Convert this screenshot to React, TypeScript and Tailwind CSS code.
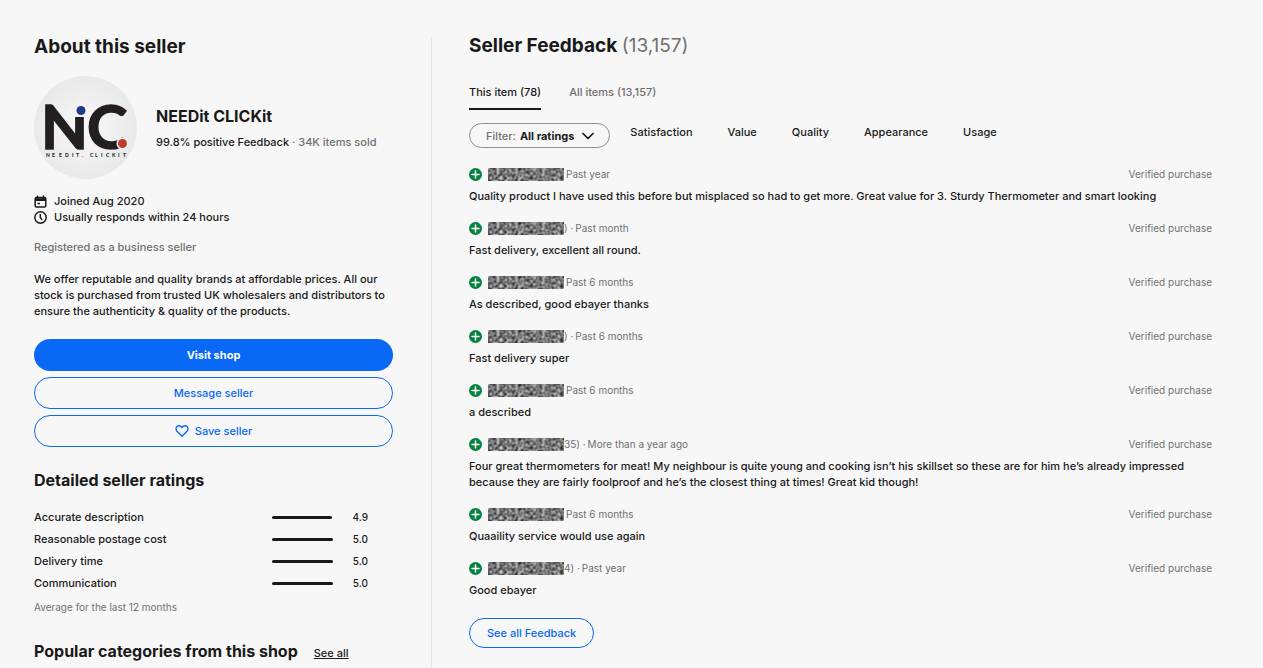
import { useState } from "react";

const tabs = ["This item (78)", "All items (13,157)"];
const topics = ["Satisfaction", "Value", "Quality", "Appearance", "Usage"];

const ratings = [
  { label: "Accurate description", score: 4.9 },
  { label: "Reasonable postage cost", score: 5 },
  { label: "Delivery time", score: 5 },
  { label: "Communication", score: 5 },
];

const feedback = [
  { tail: "", when: "Past year", text: "Quality product I have used this before but misplaced so had to get more. Great value for 3. Sturdy Thermometer and smart looking" },
  { tail: ")", when: "Past month", text: "Fast delivery, excellent all round." },
  { tail: "", when: "Past 6 months", text: "As described, good ebayer thanks" },
  { tail: ")", when: "Past 6 months", text: "Fast delivery super" },
  { tail: "", when: "Past 6 months", text: "a described" },
  { tail: "35)", when: "More than a year ago", text: "Four great thermometers for meat! My neighbour is quite young and cooking isn’t his skillset so these are for him he’s already impressed because they are fairly foolproof and he’s the closest thing at times! Great kid though!" },
  { tail: "", when: "Past 6 months", text: "Quaaility service would use again" },
  { tail: "4)", when: "Past year", text: "Good ebayer" },
];

function Logo() {
  return (
    <svg viewBox="0 0 103 103" className="size-[103px] shrink-0" role="img" aria-label="NEEDit CLICKit">
      <defs>
        <radialGradient id="disc">
          <stop offset="0" stopColor="#f8f8f8" />
          <stop offset="1" stopColor="#e9e9e9" />
        </radialGradient>
      </defs>
      <circle cx="51.5" cy="51.5" r="51.5" fill="url(#disc)" />
      <text x="7" y="73" fontFamily="Lato" fontWeight="700" fontSize="61" fill="#231f20" stroke="#231f20" strokeWidth="1.500">N</text>
      <rect x="41" y="27" width="13" height="14" fill="#f4f4f4" />
      <circle cx="47" cy="34.500" r="4.500" fill="#233a8c" />
      <text x="53" y="73" fontFamily="Lato" fontWeight="700" fontSize="61" fill="#231f20" stroke="#231f20" strokeWidth="1.500">C</text>
      <circle cx="88.500" cy="67.500" r="6" fill="#f1f1f1" />
      <circle cx="88.500" cy="67.500" r="4.500" fill="#c0392b" />
      <text x="12 18 25 31 38 42 48 56 61 67 72 78 84 89" y="81" fontFamily="Lato" fontWeight="900" fontSize="5" fill="#231f20">NEEDIT.CLICKIT</text>
    </svg>
  );
}

function Calendar() {
  return (
    <svg viewBox="0 0 13 13" className="size-[13px]" fill="none" stroke="#191919" strokeWidth="1.500">
      <rect x="1.200" y="2.500" width="10.600" height="9.500" rx="1.200" />
      <path d="M1 4h11M1 5.200h11M3.500 .5v3M9.500 .5v3" />
      <path d="M3.500 8.500h2.500" />
    </svg>
  );
}

function Clock() {
  return (
    <svg viewBox="0 0 13 13" className="size-[13px]" fill="none" stroke="#191919" strokeWidth="1.500">
      <circle cx="6.500" cy="6.500" r="5.700" />
      <path d="M6.300 3v3.800l2 2" />
    </svg>
  );
}

function Heart() {
  return (
    <svg viewBox="0 0 14 14" className="size-[14px]" fill="none" stroke="currentColor" strokeWidth="1.400" strokeLinejoin="round">
      <path d="M7 12.300 2 7.300C.6 5.800.7 3.600 2 2.500 3.500 1.200 5.700 1.500 7 3.500 8.300 1.500 10.500 1.200 12 2.500c1.300 1.100 1.400 3.300 0 4.800z" />
    </svg>
  );
}

function Positive() {
  return (
    <svg viewBox="0 0 13 13" className="size-[13px] shrink-0" role="img" aria-label="Positive feedback">
      <circle cx="6.500" cy="6.500" r="6.500" fill="#05823f" />
      <path d="M6.500 3v7M3 6.500h7" stroke="#fff" strokeWidth="1.500" strokeLinecap="round" />
    </svg>
  );
}

// grainy strip over the buyer's name
function HiddenName() {
  return (
    <svg className="ml-[6px] h-[13px] w-[76px] shrink-0" aria-hidden="true">
      <filter id="grain" x="0" y="0" width="100%" height="100%" colorInterpolationFilters="sRGB">
        <feTurbulence type="fractalNoise" baseFrequency="0.33" numOctaves="1" seed="4" />
        <feColorMatrix values="1.1 0 0 0 -0.08  1.1 0 0 0 -0.08  1.1 0 0 0 -0.08  0 0 0 0 1" />
      </filter>
      <rect width="76" height="13" filter="url(#grain)" />
    </svg>
  );
}

export default function App() {
  const [tab, setTab] = useState(0);

  return (
    <div className="flex min-h-screen bg-[#f7f7f7] pt-[37px] pr-[51px] pl-[34px] font-['Inter',sans-serif] text-[11px] leading-4 font-medium text-[#191919]">
      <aside className="w-[398px] shrink-0 border-r border-[#e5e5e5] pr-[38px]">
        <h2 className="text-[19px] leading-5 font-bold">About this seller</h2>

        <div className="mt-[19px] flex items-center gap-[19px]">
          <Logo />
          <div>
            <h3 className="text-base leading-5 font-bold">NEEDit CLICKit</h3>
            <p className="mt-2 whitespace-nowrap">
              99.8% positive Feedback <span className="text-[#707070]">· 34K items sold</span>
            </p>
          </div>
        </div>

        <ul className="mt-[14px]">
          <li className="flex items-center gap-[7px]"><Calendar />Joined Aug 2020</li>
          <li className="flex items-center gap-[7px]"><Clock />Usually responds within 24 hours</li>
        </ul>
        <p className="mt-[14px] text-[#707070]">Registered as a business seller</p>
        <p className="mt-4">
          We offer reputable and quality brands at affordable prices. All our stock is purchased from trusted UK wholesalers and distributors to ensure the authenticity &amp; quality of the products.
        </p>

        <div className="mt-5 flex flex-col gap-[6px]">
          <button className="h-8 rounded-full bg-[#0968f6] font-bold text-white">Visit shop</button>
          <button className="h-8 rounded-full border border-[#0968f6] text-[#0968f6]">Message seller</button>
          <button className="flex h-8 items-center justify-center gap-[6px] rounded-full border border-[#0968f6] text-[#0968f6]">
            <Heart />Save seller
          </button>
        </div>

        <h2 className="mt-[23px] text-base leading-5 font-bold">Detailed seller ratings</h2>
        <table className="mt-4 w-[334px]">
          <tbody>
            {ratings.map((r) => (
              <tr key={r.label} className="h-[22px]">
                <th scope="row" className="text-left font-medium">{r.label}</th>
                <td className="w-[62px]">
                  <div className="h-[3px] rounded-full bg-[#191919]" style={{ width: `${(r.score / 5) * 61}px` }} />
                </td>
                <td className="w-[34px] text-right text-[10px]">{r.score.toFixed(1)}</td>
              </tr>
            ))}
          </tbody>
        </table>
        <p className="mt-[5px] text-[10px] font-normal text-[#707070]">Average for the last 12 months</p>

        <div className="mt-[26px] flex items-baseline gap-4">
          <h2 className="text-base leading-5 font-bold whitespace-nowrap">Popular categories from this shop</h2>
          <a href="#" className="whitespace-nowrap underline">See all</a>
        </div>
      </aside>

      <main className="min-w-0 flex-1 pl-[37px]">
        <h2 className="-mt-px text-[19px] leading-5 font-bold">
          Seller Feedback <span className="font-normal text-[#707070]">(13,157)</span>
        </h2>

        <div role="tablist" className="mt-7 flex gap-7">
          {tabs.map((name, i) => (
            <button
              key={name}
              role="tab"
              aria-selected={tab === i}
              onClick={() => setTab(i)}
              className={tab === i ? "border-b-2 border-[#191919] pb-2" : "border-b-2 border-transparent pb-2 text-[#707070]"}
            >
              {name}
            </button>
          ))}
        </div>

        <div className="mt-[13px] flex items-start">
          <label className="flex h-[25px] items-center rounded-full border border-[#8f8f8f] pr-[15px] pl-4">
            <span className="text-[#707070]">Filter:</span>
            <select className="ml-1 field-sizing-content appearance-none bg-transparent font-bold">
              <option>All ratings</option>
              <option>Positive</option>
              <option>Neutral</option>
              <option>Negative</option>
            </select>
            <svg viewBox="0 0 12 8" className="ml-2 h-2 w-3" fill="none" stroke="#191919" strokeWidth="1.700" strokeLinecap="round" strokeLinejoin="round">
              <path d="M1 1.500 6 6.500l5-5" />
            </svg>
          </label>
          <div className="ml-5 flex gap-[35px] pt-px">
            {topics.map((t) => (
              <button key={t}>{t}</button>
            ))}
          </div>
        </div>

        <ul className="mt-[18px] flex flex-col gap-4">
          {feedback.map((f, i) => (
            <li key={i}>
              <div className="flex items-center text-[10px] font-normal text-[#707070]">
                <Positive />
                <HiddenName />
                {f.tail && <span>{f.tail}&nbsp;·</span>}
                <span className="ml-[2px]">{f.when}</span>
                <span className="ml-auto">Verified purchase</span>
              </div>
              <p className="mt-[6px]">{f.text}</p>
            </li>
          ))}
        </ul>

        <button className="mt-5 h-[30px] rounded-full border border-[#0968f6] px-[17px] text-[#0968f6]">See all Feedback</button>
      </main>
    </div>
  );
}
